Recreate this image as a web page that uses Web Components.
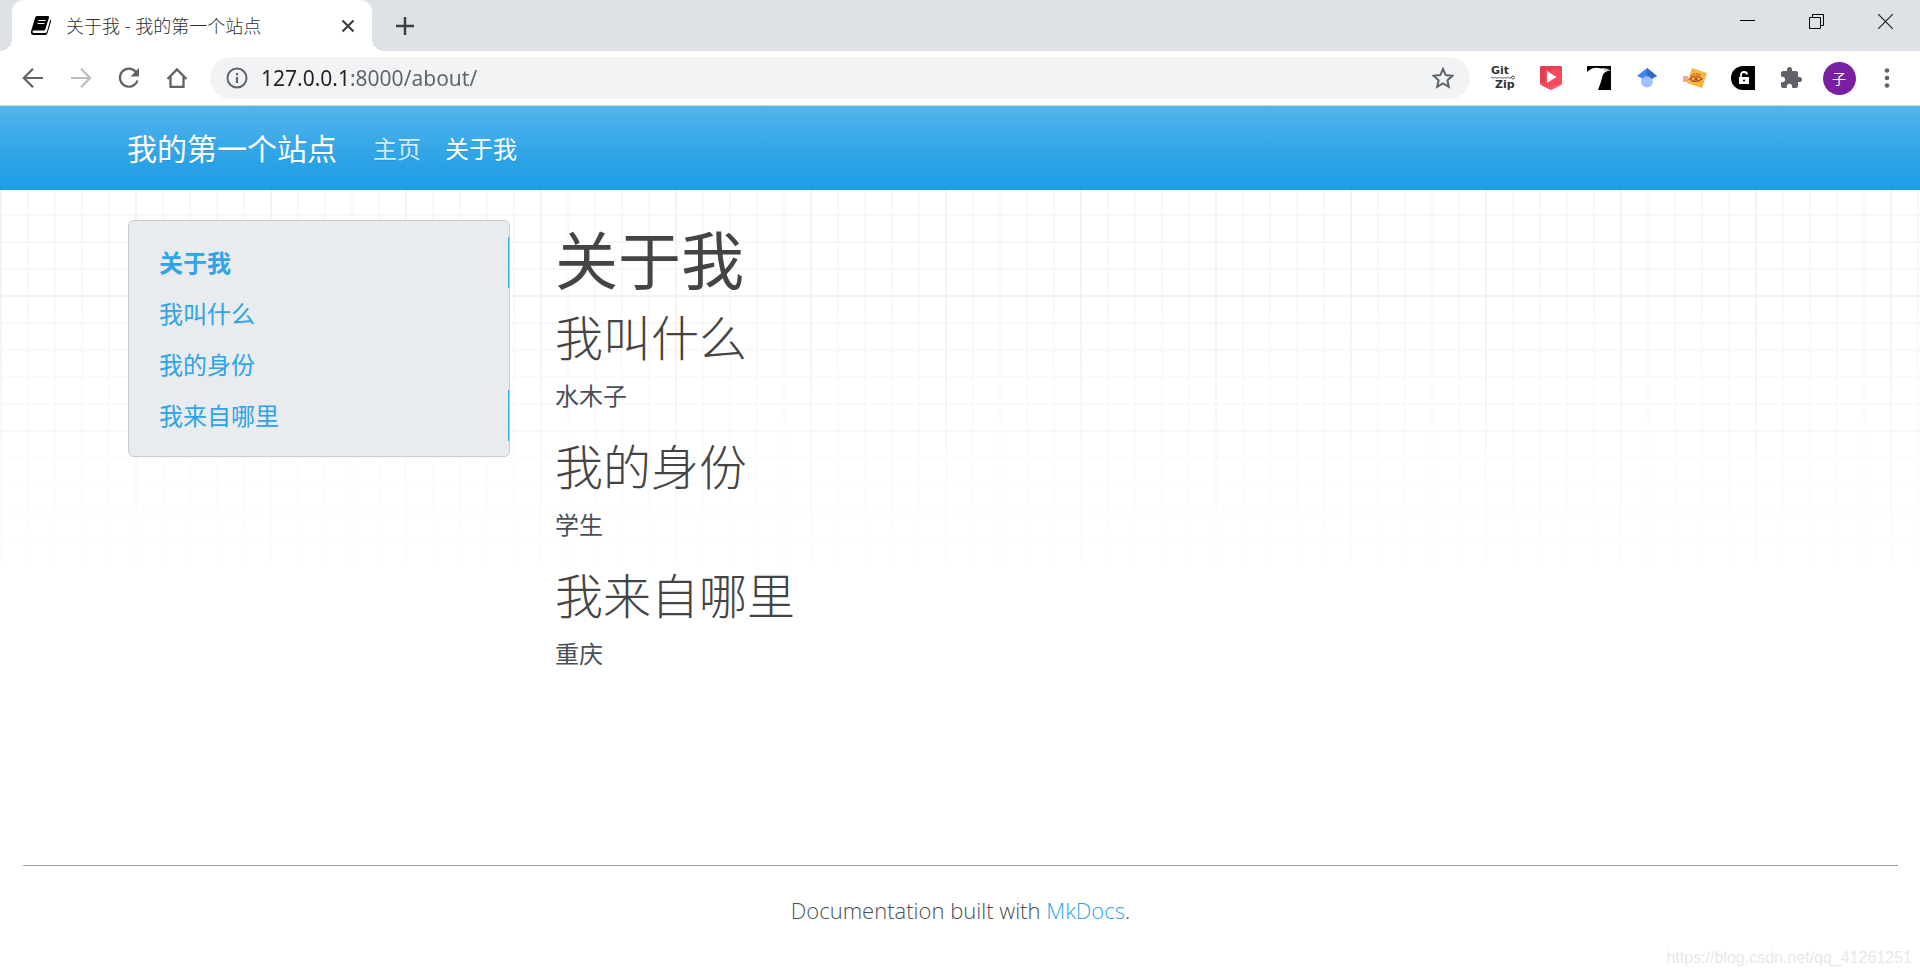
<!DOCTYPE html>
<html lang="zh-CN">
<head>
<meta charset="utf-8">
<meta name="viewport" content="width=device-width, initial-scale=1">
<title>关于我 - 我的第一个站点</title>
<style>
  html, body { margin: 0; height: 100%; }
  body { font-family: "Open Sans", "Noto Sans CJK SC", sans-serif; background: #fff; }
</style>
</head>
<body>
<browser-window>
  <browser-tabs slot="tabs" label="关于我 - 我的第一个站点"></browser-tabs>
  <browser-toolbar slot="toolbar" host="127.0.0.1" path=":8000/about/"></browser-toolbar>
  <docs-page>
    <docs-navbar slot="nav" brand="我的第一个站点">
      <a slot="links" href="#home">主页</a>
      <a slot="links" href="#about" aria-current="page">关于我</a>
    </docs-navbar>
    <docs-toc slot="toc">
      <toc-link href="#about" main mark>关于我</toc-link>
      <toc-link href="#name">我叫什么</toc-link>
      <toc-link href="#identity">我的身份</toc-link>
      <toc-link href="#from" mark>我来自哪里</toc-link>
    </docs-toc>
    <docs-article heading="关于我">
      <docs-section id="name" heading="我叫什么">水木子</docs-section>
      <docs-section id="identity" heading="我的身份">学生</docs-section>
      <docs-section id="from" heading="我来自哪里">重庆</docs-section>
    </docs-article>
    <docs-footer slot="footer"></docs-footer>
  </docs-page>
  <page-watermark slot="overlay">https://blog.csdn.net/qq_41261251</page-watermark>
</browser-window>

<script>
class BaseElement extends HTMLElement {
  connectedCallback() {
    if (this.shadowRoot) return;
    this.attachShadow({ mode: 'open' }).innerHTML = this.render();
  }
  attr(name) { return this.getAttribute(name) || ''; }
}

customElements.define('browser-window', class extends BaseElement {
  render() {
    return `<style>
      :host { display: flex; flex-direction: column; min-height: 100%; position: relative; }
      .view { flex: 1; display: flex; flex-direction: column; }
    </style>
    <slot name="tabs"></slot>
    <slot name="toolbar"></slot>
    <div class="view"><slot></slot></div>
    <slot name="overlay"></slot>`;
  }
});

customElements.define('browser-tabs', class extends BaseElement {
  render() {
    return `<style>
      :host { display: flex; height: 51px; background: #dee1e6; padding-left: 12px; }
      button { border: 0; padding: 0; background: none; display: flex; align-items: center; justify-content: center; }
      svg { display: block; }
      .tab { position: relative; box-sizing: border-box; width: 360px; display: flex; align-items: center;
             padding: 0 12px 0 18px; background: #fff; border-radius: 12px 12px 0 0; }
      .tab::before, .tab::after { content: ""; position: absolute; bottom: 0; width: 12px; height: 12px; }
      .tab::before { right: 100%; background: radial-gradient(circle at 0 0, transparent 12px, #fff 12px); }
      .tab::after { left: 100%; background: radial-gradient(circle at 100% 0, transparent 12px, #fff 12px); }
      .title { flex: 1; margin-left: 14px; font-size: 18px; line-height: 24px; font-weight: 300; color: #2c3035; white-space: nowrap; }
      .close { width: 24px; height: 24px; }
      .new { width: 42px; height: 51px; margin-left: 12px; }
      .controls { margin-left: auto; display: flex; height: 42px; }
      .controls button { width: 69px; }
    </style>
    <div class="tab">
      <svg width="22" height="20" viewBox="0 0 22 20" aria-hidden="true">
        <path d="M7 0h11q1.500 0 1 1.500l-3.500 11.500q-.5 1.500-2 1.500H4q-1.500 0-1.500 1.200T4 17h11q1.500 0 2-1.500L20.300 3.500q1 .5.700 2L17.500 17q-.5 2-2.500 2H3q-2.500-.5-2-3.500L5 2q.5-2 2-2z"/>
        <path d="M8.500 4.500h7M7.500 7.500h7M4.300 15.800h11.200l3.300-11" fill="none" stroke="#fff" stroke-width="1.200"/>
      </svg>
      <span class="title">${this.attr('label')}</span>
      <button class="close" aria-label="Close tab"><svg width="14" height="14" viewBox="0 0 14 14"><path d="M1.500 1.500l11 11M12.500 1.500l-11 11" stroke="#3c4043" stroke-width="2.200"/></svg></button>
    </div>
    <button class="new" aria-label="New tab"><svg width="18" height="18" viewBox="0 0 18 18"><path d="M9 0v18M0 9h18" stroke="#3c4043" stroke-width="2.500"/></svg></button>
    <div class="controls">
      <button aria-label="Minimize"><svg width="15" height="15" viewBox="0 0 15 15"><path d="M0 6.500h15" stroke="#000"/></svg></button>
      <button aria-label="Restore"><svg width="15" height="15" viewBox="0 0 15 15" fill="none" stroke="#000"><path d="M.5 3.500h11v11H.5zM3.500 3.500v-3h11v11h-3"/></svg></button>
      <button aria-label="Close"><svg width="15" height="15" viewBox="0 0 15 15"><path d="M0 0l15 15M15 0L0 15" stroke="#222" stroke-width="1.200"/></svg></button>
    </div>`;
  }
});

customElements.define('browser-toolbar', class extends BaseElement {
  render() {
    return `<style>
      :host { display: flex; align-items: center; height: 54px; padding: 0 9px; background: #fff; border-bottom: 1px solid #d8dadd; }
      button { flex: none; width: 48px; height: 42px; border: 0; padding: 0; background: none; display: flex; align-items: center; justify-content: center; }
      svg { display: block; }
      .bar { flex: 1; display: flex; align-items: center; height: 42px; margin: 0 9px; border-radius: 21px; background: #f1f3f4; }
      .bar button { width: 54px; }
      .bar .info { width: 51px; justify-content: flex-end; padding-right: 13px; box-sizing: border-box; }
      input { flex: 1; min-width: 0; border: 0; outline: 0; padding: 0; font: 21px/30px "Noto Sans", "Open Sans", sans-serif; color: #202124;
              background: linear-gradient(90deg, #202124 90px, #5f6368 90px) text; -webkit-text-fill-color: transparent; }
      .avatar { display: block; width: 33px; height: 33px; border-radius: 50%; background: #7b1fa2; color: #fff; font: 14px/32px "Noto Sans CJK SC", sans-serif; }
    </style>
    <button aria-label="Back"><svg width="22" height="22" viewBox="0 0 22 22" fill="none" stroke="#5f6368" stroke-width="2.200"><path d="M21 11H2.500M11 1.800L1.800 11l9.200 9.200"/></svg></button>
    <button aria-label="Forward"><svg width="22" height="22" viewBox="0 0 22 22" fill="none" stroke="#babcbe" stroke-width="2.200"><path d="M1 11h18.500M11 1.800l9.200 9.200-9.200 9.200"/></svg></button>
    <button aria-label="Reload"><svg width="22" height="22" viewBox="0 0 22 22"><path d="M18.300 5.500A9 9 0 1 0 19.500 13.500" fill="none" stroke="#5f6368" stroke-width="2.200"/><path d="M21 1v8.500h-8.500z" fill="#5f6368"/></svg></button>
    <button aria-label="Home"><svg width="22" height="22" viewBox="0 0 22 22"><path d="M1.500 12L11 2.500l9.500 9.500M4.500 10v9.800h13V10" fill="none" stroke="#5f6368" stroke-width="2.300"/></svg></button>
    <div class="bar">
      <button class="info" aria-label="Site information"><svg width="22" height="22" viewBox="0 0 22 22"><circle cx="11" cy="11" r="9.500" fill="none" stroke="#5f6368" stroke-width="2"/><path d="M11 10v6M11 6v2.200" stroke="#5f6368" stroke-width="2.200"/></svg></button>
      <input type="text" aria-label="Address" value="${this.attr('host')}${this.attr('path')}">
      <button aria-label="Bookmark"><svg width="22" height="22" viewBox="0 0 22 22"><path d="M11 2l2.700 6.100 6.700.7-5 4.500 1.400 6.500-5.800-3.400-5.800 3.400 1.400-6.500-5-4.500 6.700-.7z" fill="none" stroke="#5f6368" stroke-width="2"/></svg></button>
    </div>
    <button aria-label="GitZip"><svg width="28" height="32" viewBox="-2 -4 28 32" font-family="DejaVu Sans" font-weight="700" font-size="11" fill="#333"><text x="0" y="8">Git</text><text x="4" y="22">Zip</text><path d="M0 12l1.500-1 1.500 1.500 1.500-1.500 1.500 1.500 1.500-1.500 1.500 1.500 1.500-1.500 1.500 1.500 1.500-1.500 1.500 1.500 1.500-1.500 1.500 1.500 2-1" fill="none" stroke="#555"/><circle cx="22" cy="11.500" r="1.500" fill="none" stroke="#555"/></svg></button>
    <button aria-label="Video downloader"><svg width="22" height="24" viewBox="0 0 22 24"><path d="M2 0h18q2 0 2 2v15q0 1.500-1.500 2.200L11 24l-9.500-4.800Q0 18.500 0 17V2q0-2 2-2z" fill="#f8485a"/><path d="M0 0h22v4L16 2.500 5 5v13l6 6-9.500-4.800Q0 18.500 0 17z" fill="#c93649" opacity=".45"/><path d="M0 16l11 5 11-5v1q0 1.500-1.500 2.200L11 24l-9.500-4.800Q0 18.500 0 17z" fill="#ff6472" opacity=".5"/><path d="M7 5v12l9.500-6z" fill="#fff"/></svg></button>
    <button aria-label="Eagle"><svg width="24" height="24" viewBox="0 0 24 24"><path d="M0 0h24v24H0z"/><path d="M0 6Q6 0 14 2.500q5-1 9.500 2Q18 5 16 8.500 14.500 15 11 24H0z" fill="#fff"/><path d="M17 4q3-.5 5 .5" stroke="#999" fill="none"/></svg></button>
    <button aria-label="Scholar"><svg width="22" height="22" viewBox="0 0 22 22"><circle cx="11" cy="14.500" r="6" fill="#a0c3ff"/><path d="M11 1L1 9l5.500 2.500Q11 7 15.500 11.500L21 9z" fill="#4285f4"/><path d="M11 1l10 8-5.500 3Q14 9 11 9z" fill="#356ac3"/></svg></button>
    <button aria-label="Page viewer"><svg width="26" height="24" viewBox="0 0 26 24"><path d="M10 2l15 5-5 15-15-5z" fill="#f4b63e"/><path d="M8 13q5-6 12 0-7 5-12 0zM9 9l1 1M12 7v2M15 7v2M18 8l-1 2" stroke="#b5481c" stroke-width="1.200" fill="none"/><circle cx="14" cy="13" r="1.700" fill="#b5481c"/><path d="M1 11h5M1 13h6M1 15h5" stroke="#e0563c" stroke-width="1.200"/></svg></button>
    <button aria-label="Unlock"><svg width="24" height="24" viewBox="0 0 24 24"><path d="M12 0h12v24H12A12 12 0 0 1 12 0z"/><path d="M8 11h10v7H8z" fill="#fff"/><path d="M10 11V9q0-3 3-3t3 2.500" fill="none" stroke="#fff" stroke-width="1.800"/><circle cx="13" cy="14.500" r="1"/></svg></button>
    <button aria-label="Extensions"><svg width="24" height="24" viewBox="0 0 24 24"><path d="M20.500 11H19V7c0-1.100-.9-2-2-2h-4V3.500a2.500 2.500 0 0 0-5 0V5H4c-1.100 0-2 .9-2 2v3.800h1.500c1.500 0 2.700 1.200 2.700 2.700S5 16.200 3.500 16.200H2V20c0 1.100.9 2 2 2h3.800v-1.500c0-1.500 1.200-2.700 2.700-2.700s2.700 1.200 2.700 2.700V22H17c1.100 0 2-.9 2-2v-4h1.500a2.500 2.500 0 0 0 0-5z" fill="#5f6368"/></svg></button>
    <button aria-label="Profile"><span class="avatar">子</span></button>
    <button aria-label="Menu"><svg width="6" height="20" viewBox="0 0 6 20" fill="#5f6368"><circle cx="3" cy="2.500" r="2.300"/><circle cx="3" cy="10" r="2.300"/><circle cx="3" cy="17.500" r="2.300"/></svg></button>`;
  }
});

customElements.define('docs-page', class extends BaseElement {
  render() {
    return `<style>
      :host { flex: 1; display: flex; flex-direction: column; }
      .body { --minor: #f8f8f8; --major: #f3f3f3; flex: 1; background:
        linear-gradient(180deg, transparent 100px, rgba(255,255,255,.8) 374px, #fff 376px),
        linear-gradient(90deg, var(--major) 2px, transparent 2px) 0 0 / 135px 100%,
        linear-gradient(180deg, var(--major) 2px, transparent 2px) 0 105px / 100% 135px,
        linear-gradient(90deg, var(--minor) 2px, transparent 2px) 0 0 / 27px 100%,
        linear-gradient(180deg, var(--minor) 2px, transparent 2px) 0 24px / 100% 27px;
        background-color: #fff; }
      .container { box-sizing: border-box; max-width: 1710px; margin: 0 auto; padding: 30px 23px;
        display: grid; grid-template-columns: minmax(0, 382px) minmax(0, 1fr); gap: 45px; align-items: start; }
    </style>
    <slot name="nav"></slot>
    <div class="body"><div class="container"><slot name="toc"></slot><slot></slot></div></div>
    <slot name="footer"></slot>`;
  }
});

customElements.define('docs-navbar', class extends BaseElement {
  render() {
    return `<style>
      :host { display: block; background: linear-gradient(#54b4eb, #2fa4e7 60%, #1d9ce5); }
      nav { box-sizing: border-box; max-width: 1710px; height: 84px; margin: 0 auto; padding: 2px 23px 0 22px; display: flex; align-items: center;
            text-shadow: 0 1px 0 rgba(0,0,0,.08); }
      .brand { font-size: 30px; line-height: 44px; color: #fff; text-decoration: none; margin-right: 36px; }
      .links { display: flex; gap: 24px; font-size: 24px; line-height: 36px; }
      ::slotted(a) { color: rgba(255,255,255,.8); text-decoration: none; }
      ::slotted(a[aria-current]) { color: #fff; }
    </style>
    <nav><a class="brand" href="#top">${this.attr('brand')}</a><div class="links"><slot name="links"></slot></div></nav>`;
  }
});

customElements.define('docs-toc', class extends BaseElement {
  render() {
    return `<style>
      :host { display: block; }
      nav { display: flex; flex-direction: column; padding: 16px 0 15px; background: #e9ecef; border: 1px solid #c9cccf; border-radius: 6px; }
    </style>
    <nav aria-label="目录"><slot></slot></nav>`;
  }
});

customElements.define('toc-link', class extends BaseElement {
  render() {
    return `<style>
      :host { display: block; border-right: 1px solid transparent; }
      :host([mark]) { border-right-color: #2fa4e7; }
      a { display: block; padding: 0 30px; font-size: 24px; line-height: 51px; color: #2fa4e7; text-decoration: none;
          text-shadow: 0 1px 0 rgba(0,0,0,.05); }
      :host([main]) a { font-weight: 700; }
    </style>
    <a href="${this.attr('href')}"><slot></slot></a>`;
  }
});

customElements.define('docs-article', class extends BaseElement {
  render() {
    return `<style>
      :host { display: block; }
      h1 { margin: 0 0 9px; font-size: 63px; line-height: 80px; font-weight: 400; color: #444; }
    </style>
    <main><h1>${this.attr('heading')}</h1><slot></slot></main>`;
  }
});

customElements.define('docs-section', class extends BaseElement {
  render() {
    return `<style>
      :host { display: block; }
      h2 { margin: 0 0 12px; font-size: 48px; line-height: 57px; font-weight: 300; color: #444; }
      p { margin: 0 0 24px; font-size: 24px; line-height: 36px; color: #495057; }
    </style>
    <h2>${this.attr('heading')}</h2><p><slot></slot></p>`;
  }
});

customElements.define('docs-footer', class extends BaseElement {
  render() {
    return `<style>
      :host { display: block; padding: 0 22px 48px 23px; }
      hr { margin: 0 0 26px; border: 0; border-top: 1px solid #a0a0a0; }
      p { margin: 0; text-align: center; font-size: 22px; line-height: 36px; font-weight: 300; color: #495057; }
      a { color: #2fa4e7; text-decoration: none; }
    </style>
    <footer><hr><p>Documentation built with <a href="#mkdocs">MkDocs</a>.</p></footer>`;
  }
});

customElements.define('page-watermark', class extends BaseElement {
  render() {
    return `<style>
      :host { position: absolute; right: 8px; bottom: 7px; font: 16px/22px "Liberation Sans", sans-serif; color: #e8e8e8; }
    </style>
    <slot></slot>`;
  }
});
</script>
</body>
</html>
